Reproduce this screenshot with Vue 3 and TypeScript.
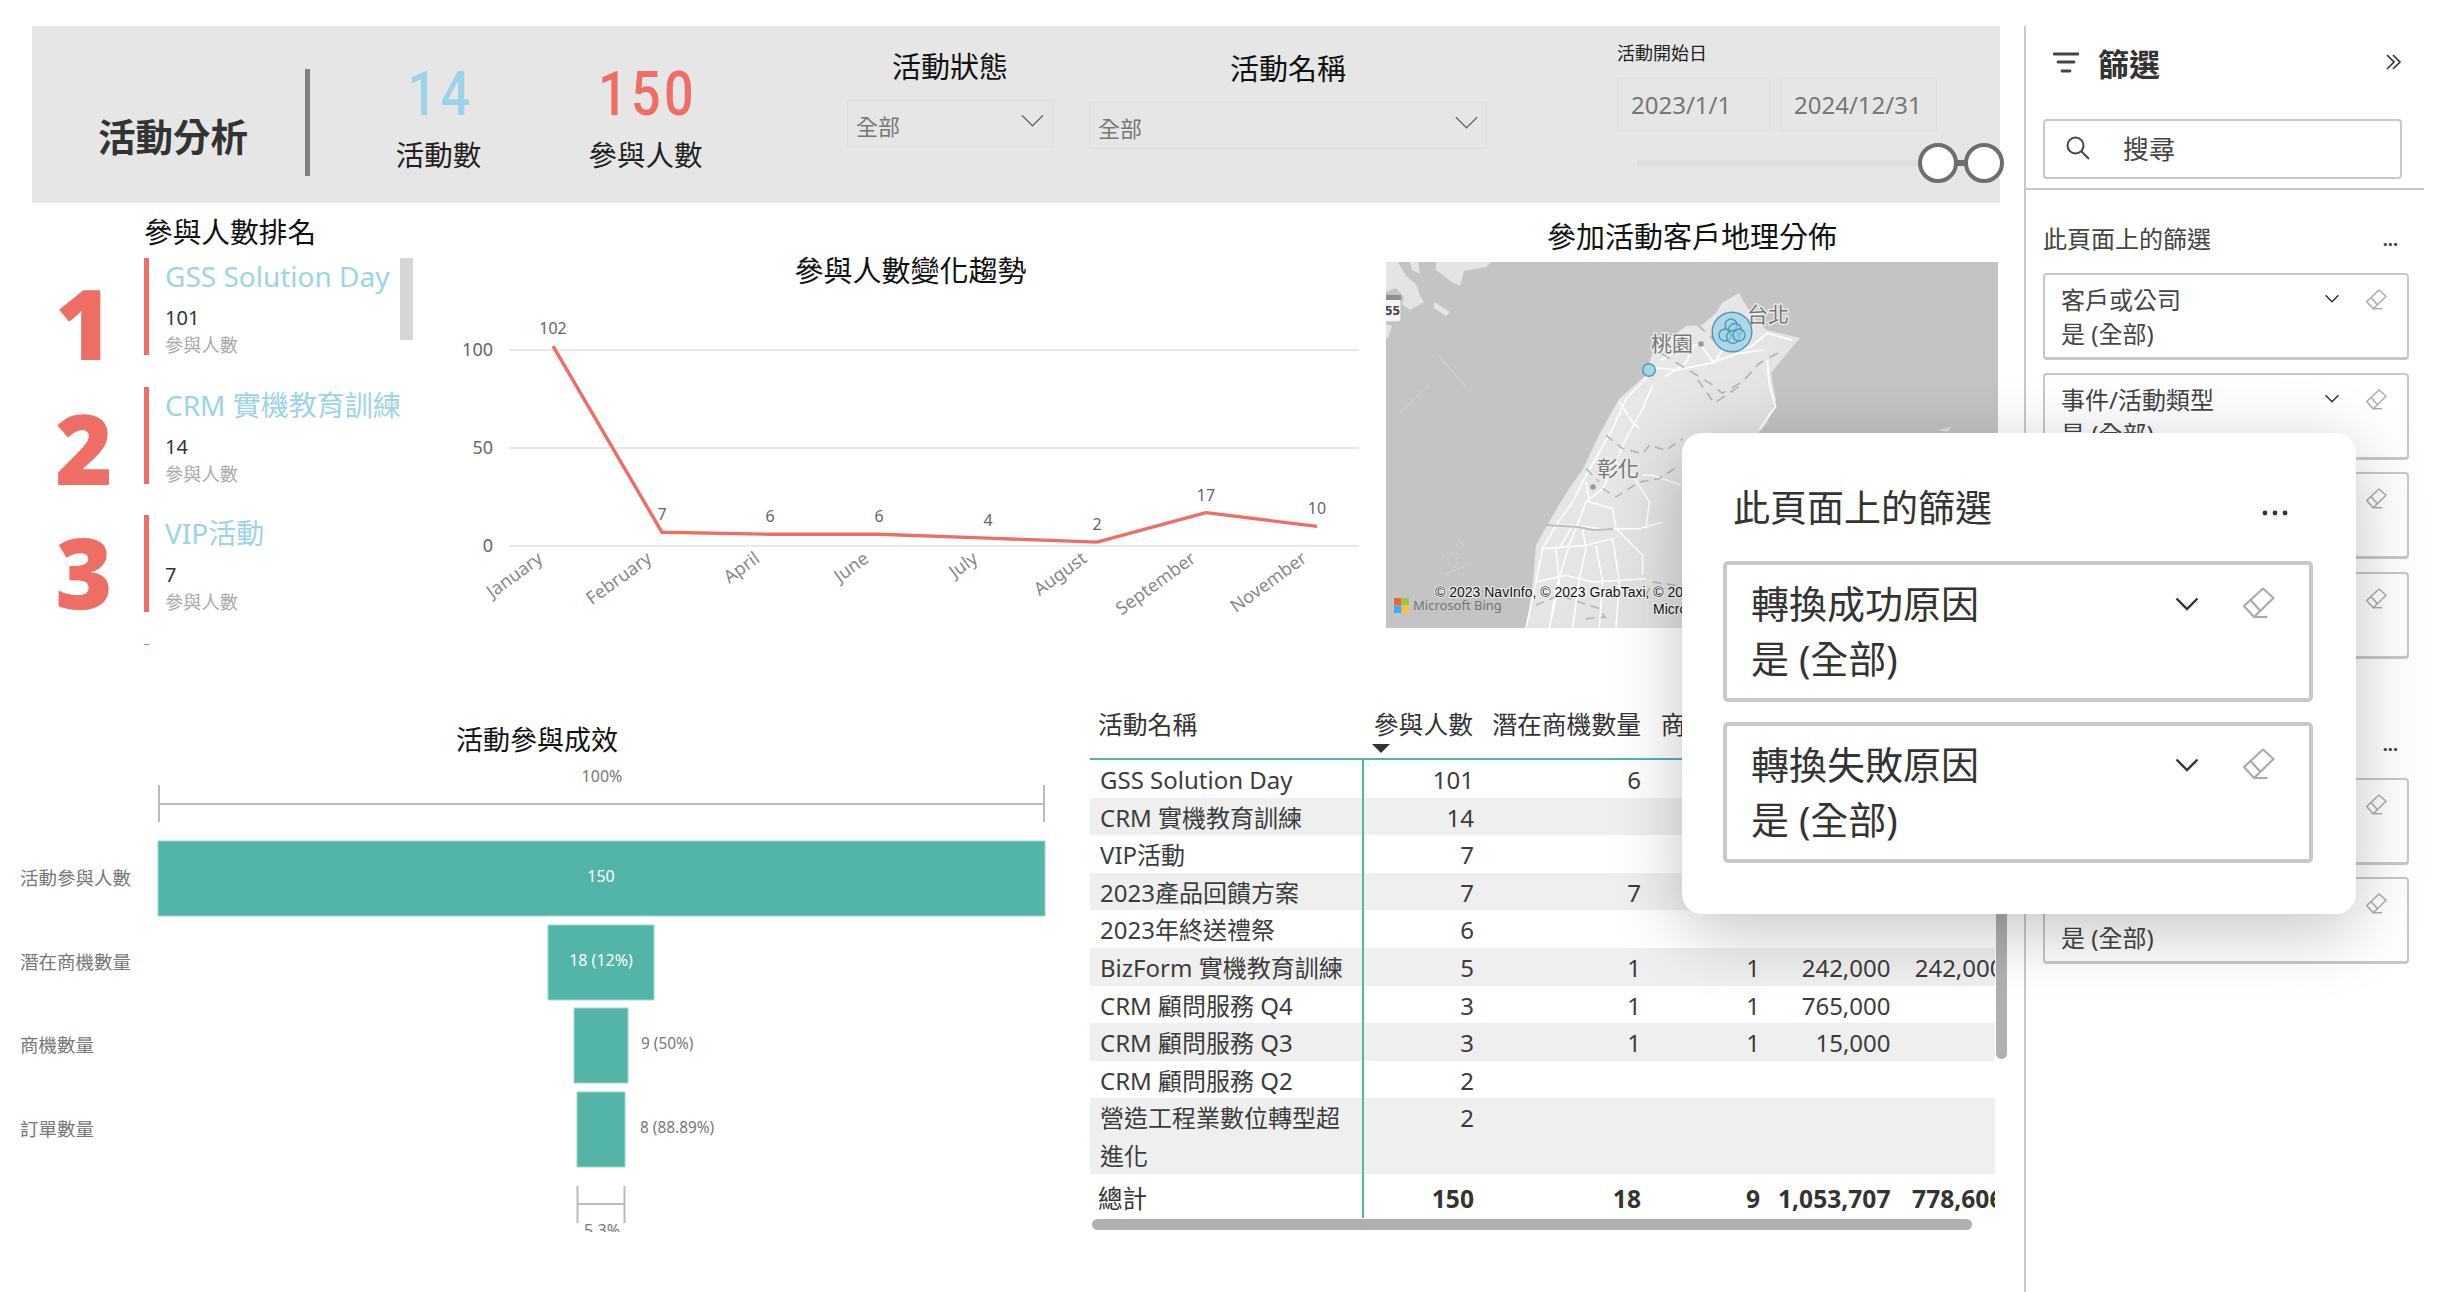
<script setup lang="ts">
interface Rank { num: number; name: string; value: string; offset: number }
const ranks: Rank[] = [
  { num: 1, name: 'GSS Solution Day', value: '101', offset: 15 },
  { num: 2, name: 'CRM 實機教育訓練', value: '14', offset: 11 },
  { num: 3, name: 'VIP活動', value: '7', offset: 7 },
]

const trend = [
  { m: 'January', v: 102, x: 98 },
  { m: 'February', v: 7, x: 207 },
  { m: 'April', v: 6, x: 315 },
  { m: 'June', v: 6, x: 424 },
  { m: 'July', v: 4, x: 533 },
  { m: 'August', v: 2, x: 642 },
  { m: 'September', v: 17, x: 751 },
  { m: 'November', v: 10, x: 862 },
]
const yOf = (v: number): number => 262 - v * 1.96
const linePts = trend.map((p) => `${p.x},${yOf(p.v)}`).join(' ')

const funnel = [
  { label: '活動參與人數', x: 158, w: 887, y: 89, text: '150', inside: true, tx: 601 },
  { label: '潛在商機數量', x: 548, w: 106, y: 173, text: '18 (12%)', inside: true, tx: 601 },
  { label: '商機數量', x: 574, w: 54, y: 256, text: '9 (50%)', inside: false, tx: 641 },
  { label: '訂單數量', x: 577, w: 48, y: 340, text: '8 (88.89%)', inside: false, tx: 640 },
]

interface Row { name: string; c: string[]; grey: boolean }
const rows: Row[] = [
  { name: 'GSS Solution Day', c: ['101', '6', '', '', ''], grey: false },
  { name: 'CRM 實機教育訓練', c: ['14', '', '', '', ''], grey: true },
  { name: 'VIP活動', c: ['7', '', '', '', ''], grey: false },
  { name: '2023產品回饋方案', c: ['7', '7', '', '', ''], grey: true },
  { name: '2023年終送禮祭', c: ['6', '', '', '', ''], grey: false },
  { name: 'BizForm 實機教育訓練', c: ['5', '1', '1', '242,000', '242,000'], grey: true },
  { name: 'CRM 顧問服務 Q4', c: ['3', '1', '1', '765,000', ''], grey: false },
  { name: 'CRM 顧問服務 Q3', c: ['3', '1', '1', '15,000', ''], grey: true },
  { name: 'CRM 顧問服務 Q2', c: ['2', '', '', '', ''], grey: false },
  { name: '營造工程業數位轉型超進化', c: ['2', '', '', '', ''], grey: true },
]
const totals = ['150', '18', '9', '1,053,707', '778,606']
const headers = ['參與人數', '潛在商機數量', '商機數量', '預估金額', '成交金額']

const pageFilters = ['客戶或公司', '事件/活動類型', '活動地點', '活動類別']
const reportFilters = ['負責業務', '產業']
const popupFilters = ['轉換成功原因', '轉換失敗原因']

const bubbles = [
  { x: 345, y: 63, r: 6 },
  { x: 349, y: 68, r: 6.5 },
  { x: 339, y: 73, r: 6 },
  { x: 347, y: 75, r: 6.5 },
  { x: 353, y: 73, r: 6 },
]
const southRoads = [
  'M790 340 L720 410 L680 500 L640 570 L590 660 L560 720 L510 790 L470 860 L450 960 L420 1098',
  'M800 370 L770 440 L720 530 L690 600 L650 680 L600 720 L550 850 L510 980 L490 1098',
  'M470 860 L600 850 L680 830',
  'M500 790 L560 790 L640 800 L760 800 L830 780',
  'M600 660 L610 720 L680 740 L690 800 L770 880 L770 940',
  'M790 720 L780 800',
  'M590 800 L600 860 L580 950 L560 1098',
  'M510 860 L520 960 L490 1098',
  'M640 570 L600 640',
  'M700 420 L740 480 L760 500',
  'M560 790 L520 860',
  'M630 850 L650 960 L640 1098',
  'M680 830 L700 960 L690 1098',
  'M450 960 L540 940 L620 960 L780 950',
  'M770 640 L800 640 L885 670',
  'M690 600 L740 640 L790 720',
]
const southCounty = [
  'M660 520 L710 560 L770 575 L790 550 L840 565 L890 530',
  'M600 620 L640 660',
  'M650 680 L690 705 L760 660 L820 650 L880 610',
  'M450 1030 L520 1000 L640 1040 L660 1070',
  'M780 1000 L800 960 L870 970',
  'M600 1070 L660 1065',
]
const northRoads = [
  'M600 350 L680 360 L760 340 L830 310 L890 300',
  'M650 380 L700 340 L720 290',
  'M740 290 L770 340 L790 300',
  'M830 300 L860 290 L900 250 L960 270',
  'M900 330 L905 400 L920 470 L880 540',
  'M640 330 L680 300 L740 280',
]
const northCounty = [
  'M640 310 L720 370 L760 400 L790 430 L840 395 L880 340 L940 300',
  'M730 390 L770 460 L830 410',
  'M730 225 L770 270',
]
</script>

<template>
  <div class="page">
    <main class="main">
      <header class="top">
        <div class="top-title">活動分析</div>
        <div class="top-rule"></div>
        <div class="kpi kpi-first">
          <div class="kpi-num blue">14</div>
          <div class="kpi-label">活動數</div>
        </div>
        <div class="kpi">
          <div class="kpi-num red">150</div>
          <div class="kpi-label">參與人數</div>
        </div>
        <div class="slicer slicer-status">
          <div class="slicer-title">活動狀態</div>
          <div class="drop">
            <span>全部</span>
            <svg class="drop-chev" viewBox="0 0 24 13"><polyline points="1,1 12,12 23,1" /></svg>
          </div>
        </div>
        <div class="slicer slicer-name">
          <div class="slicer-title">活動名稱</div>
          <div class="drop">
            <span>全部</span>
            <svg class="drop-chev" viewBox="0 0 24 13"><polyline points="1,1 12,12 23,1" /></svg>
          </div>
        </div>
        <div class="dates">
          <div class="dates-title">活動開始日</div>
          <div class="dates-row">
            <div class="date date-a">2023/1/1</div>
            <div class="date date-b">2024/12/31</div>
          </div>
          <div class="track">
            <span class="knob knob-a"></span>
            <span class="knob-link"></span>
            <span class="knob knob-b"></span>
          </div>
        </div>
      </header>

      <section class="row-one">
        <div class="rank">
          <div class="rank-title">參與人數排名</div>
          <div class="rank-list">
            <div v-for="r in ranks" :key="r.num" class="rank-item">
              <div class="rank-num" :style="{ marginTop: r.offset + 'px' }">{{ r.num }}</div>
              <div class="rank-body">
                <div class="rank-name">{{ r.name }}</div>
                <div class="rank-value">{{ r.value }}</div>
                <div class="rank-sub">參與人數</div>
              </div>
            </div>
            <div class="rank-item">
              <div class="rank-num"></div>
              <div class="rank-body"></div>
            </div>
            <div class="rank-scroll"></div>
          </div>
        </div>

        <div class="trend">
          <div class="trend-title">參與人數變化趨勢</div>
          <svg class="trend-svg" width="931" height="376" viewBox="0 0 931 376">
            <g class="grid">
              <line x1="54" x2="904" y1="66" y2="66" />
              <line x1="54" x2="904" y1="164" y2="164" />
              <line x1="54" x2="904" y1="262" y2="262" />
            </g>
            <text class="y-lab" x="38" y="72">100</text>
            <text class="y-lab" x="38" y="170">50</text>
            <text class="y-lab" x="38" y="268">0</text>
            <polyline class="trend-line" :points="linePts" />
            <text v-for="p in trend" :key="'v' + p.m" class="val-lab" :x="p.x" :y="yOf(p.v) - 12">{{ p.v }}</text>
            <text
              v-for="p in trend"
              :key="p.m"
              class="x-lab"
              :transform="`translate(${p.x - 9} 277) rotate(-36)`"
            >{{ p.m }}</text>
          </svg>
        </div>

        <div class="geo">
          <div class="geo-title">參加活動客戶地理分佈</div>
          <svg class="map" width="612" height="366" viewBox="0 0 612 366">
            <defs>
              <clipPath id="mapClip"><rect width="612" height="366" /></clipPath>
              <linearGradient id="landFade" x1="0" y1="0" x2="1" y2="1">
                <stop offset="0" stop-color="#ececec" />
                <stop offset="1" stop-color="#dedede" />
              </linearGradient>
            </defs>
            <g clip-path="url(#mapClip)">
              <rect width="612" height="366" fill="#c4c4c4" />
              <g fill="#e4e4e4">
                <path d="M0 0 L12 0 L20 14 L30 22 L34 34 L24 42 L10 26 L0 30Z" />
                <path d="M24 0 L32 0 L34 12 L26 8Z" />
                <path d="M50 0 L105 0 L100 5 L78 9 L74 24 L66 20 L58 14 L50 8Z" />
                <path d="M20 30 L34 34 L38 40 L24 48 L16 42Z" />
                <path d="M48 40 L64 50 L60 54 L48 46Z" />
                <path d="M0 62 L6 64 L2 76 L0 76Z" />
              </g>
              <g fill="none" stroke="#d8d8d8" stroke-width="1">
                <path d="M15 150 L43 123" />
                <path d="M52 93 L80 125" />
                <path d="M56 295 Q66 288 72 292 L70 304 L60 312 Q70 308 82 302" stroke-dasharray="3 2" />
                <path d="M72 276 L78 284" />
              </g>
              <path fill="#e0e0e0" d="M552 168 L566 164 L562 170Z" />
              <polygon
                fill="url(#landFade)"
                points="353,31 336,41 330,51 316,63 300,64 267,90 260,113 233,137 213,173 197,207 183,227 167,253 150,283 147,320 140,366 400,366 369,175 381,161 390,138 385,111 398,95 414,76 381,68 369,58 361,45"
              />
              <g class="roads" transform="scale(0.3333)">
                <path v-for="d in southRoads" :key="d" :d="d" />
              </g>
              <g class="county" transform="scale(0.3333)">
                <path v-for="d in southCounty" :key="d" :d="d" />
              </g>
              <path class="river" d="M160 263 L193 265 L207 268 L227 267" />
              <g class="roads-n" transform="translate(14 -12) scale(0.408 0.3333)">
                <path v-for="d in northRoads" :key="d" :d="d" />
              </g>
              <g class="county-n" transform="translate(14 -12) scale(0.408 0.3333)">
                <path v-for="d in northCounty" :key="d" :d="d" />
              </g>
              <text class="city" x="361" y="60">台北</text>
              <text class="city" x="265" y="89">桃園</text>
              <circle class="city-dot" cx="315" cy="82" r="2.8" />
              <text class="city" x="211" y="214">彰化</text>
              <circle class="city-dot" cx="207" cy="225" r="2.8" />
              <circle class="bubble big" cx="346" cy="70" r="19.8" />
              <circle v-for="(b, i) in bubbles" :key="i" class="bubble" :cx="b.x" :cy="b.y" :r="b.r" />
              <circle class="bubble solo" cx="263" cy="108" r="6.3" />
              <g>
                <rect x="-6" y="33" width="21" height="27" rx="3" fill="#f4f4f4" stroke="#bbb" />
                <rect x="-6" y="33" width="21" height="5" fill="#8f8f8f" />
                <text class="shield" x="-1" y="53">55</text>
              </g>
              <g>
                <rect x="8" y="336" width="7.4" height="7.4" fill="#e46a2e" />
                <rect x="15.6" y="336" width="7.4" height="7.4" fill="#9cc64c" />
                <rect x="8" y="343.6" width="7.4" height="7.4" fill="#45aaf0" />
                <rect x="15.6" y="343.6" width="7.4" height="7.4" fill="#fbc23d" />
                <text class="bing" x="27" y="348">Microsoft Bing</text>
              </g>
              <text class="attr" x="49" y="335">© 2023 NavInfo, © 2023 GrabTaxi, © 2023 Zenrin</text>
              <text class="attr" x="267" y="352">Microsoft</text>
            </g>
          </svg>
        </div>
      </section>

      <section class="row-two">
        <div class="funnel">
          <div class="funnel-title">活動參與成效</div>
          <svg class="funnel-svg" width="1090" height="480" viewBox="0 0 1090 480">
            <text class="fn-small" x="602" y="30">100%</text>
            <g class="bracket">
              <line x1="159" x2="159" y1="33" y2="70" />
              <line x1="1044" x2="1044" y1="33" y2="70" />
              <line x1="159" x2="1044" y1="52" y2="52" />
            </g>
            <g v-for="f in funnel" :key="f.label">
              <text class="fn-cat" x="20" :y="f.y + 44">{{ f.label }}</text>
              <rect class="fn-bar" :x="f.x" :y="f.y" :width="f.w" height="75" />
              <text :class="f.inside ? 'fn-in' : 'fn-out'" :x="f.tx" :y="f.y + 41">{{ f.text }}</text>
            </g>
            <g class="bracket">
              <line x1="577.5" x2="577.5" y1="434" y2="471" />
              <line x1="624.5" x2="624.5" y1="434" y2="471" />
              <line x1="577.5" x2="624.5" y1="452" y2="452" />
            </g>
            <text class="fn-small" x="602" y="484">5.3%</text>
          </svg>
        </div>

        <div class="table-col">
          <div class="table-clip">
            <div class="t-head t-grid">
              <div class="th th-name">活動名稱</div>
              <div v-for="(h, i) in headers" :key="h" class="th num">
                <span>{{ h }}</span>
                <span v-if="i === 0" class="sort"></span>
              </div>
            </div>
            <div v-for="r in rows" :key="r.name" class="t-grid t-row" :class="{ grey: r.grey }">
              <div class="td-name">{{ r.name }}</div>
              <div v-for="(c, i) in r.c" :key="i" class="td num">{{ c }}</div>
            </div>
            <div class="t-grid t-total">
              <div class="td-name total-name">總計</div>
              <div v-for="(c, i) in totals" :key="i" class="td num total-num">{{ c }}</div>
            </div>
          </div>
          <div class="h-scroll"></div>
          <div class="v-scroll"></div>
        </div>
      </section>
    </main>

    <aside class="side">
      <div class="side-head">
        <svg class="side-filter" width="26" height="22" viewBox="0 0 26 22">
          <path d="M1 3 H25 M5 11 H21 M9 20 H17" />
        </svg>
        <div class="side-title">篩選</div>
        <svg class="side-collapse" width="16" height="16" viewBox="0 0 16 16">
          <path d="M1 1 L8 8 L1 15 M7 1 L14 8 L7 15" />
        </svg>
      </div>
      <div class="search">
        <svg class="search-ico" width="24" height="24" viewBox="0 0 24 24">
          <circle cx="9.5" cy="9.5" r="8" />
          <path d="M15.5 15.5 L23 23" />
        </svg>
        <span>搜尋</span>
      </div>
      <div class="side-rule"></div>

      <div class="group-head group-first">
        <span>此頁面上的篩選</span>
        <span class="dots">...</span>
      </div>
      <div class="cards">
        <div v-for="f in pageFilters" :key="f" class="card">
          <div class="card-top">
            <span class="card-name">{{ f }}</span>
            <svg class="chev" viewBox="0 0 24 14"><polyline points="2,2 12,12 22,2" /></svg>
            <svg class="eraser" viewBox="0 0 32 32">
              <path d="M20 1.5 L30.5 11 L11 30 L1 19Z" />
              <path d="M7.5 13 L17.5 24" />
              <path d="M11 30 H24.5" />
            </svg>
          </div>
          <div class="card-val">是 (全部)</div>
        </div>
      </div>

      <div class="group-head group-second">
        <span>所有頁面上的篩選</span>
        <span class="dots">...</span>
      </div>
      <div class="cards cards-report">
        <div v-for="f in reportFilters" :key="f" class="card">
          <div class="card-top">
            <span class="card-name">{{ f }}</span>
            <svg class="chev" viewBox="0 0 24 14"><polyline points="2,2 12,12 22,2" /></svg>
            <svg class="eraser" viewBox="0 0 32 32">
              <path d="M20 1.5 L30.5 11 L11 30 L1 19Z" />
              <path d="M7.5 13 L17.5 24" />
              <path d="M11 30 H24.5" />
            </svg>
          </div>
          <div class="card-val">是 (全部)</div>
        </div>
      </div>
    </aside>

    <div class="popup">
      <div class="popup-head">
        <span>此頁面上的篩選</span>
        <svg class="popup-dots" width="26" height="6" viewBox="0 0 26 6">
          <circle cx="3" cy="3" r="2.4" /><circle cx="13" cy="3" r="2.4" /><circle cx="23" cy="3" r="2.4" />
        </svg>
      </div>
      <div v-for="f in popupFilters" :key="f" class="pcard">
        <div class="pcard-top">
          <span class="pcard-name">{{ f }}</span>
          <svg class="pchev" viewBox="0 0 24 14"><polyline points="1.5,1.5 12,12 22.5,1.5" /></svg>
          <svg class="peraser" viewBox="0 0 32 32">
            <path d="M20 1.5 L30.5 11 L11 30 L1 19Z" />
            <path d="M7.5 13 L17.5 24" />
            <path d="M11 30 H24.5" />
          </svg>
        </div>
        <div class="pcard-val">是 (全部)</div>
      </div>
    </div>
  </div>
</template>

<style>
html, body { margin: 0; background: #fff; }
</style>

<style scoped>
.page {
  --cjk: "Noto Sans", "Noto Sans CJK TC", sans-serif;
  position: relative;
  display: flex;
  width: 2462px;
  height: 1292px;
  overflow: hidden;
  background: #fff;
  font-family: var(--cjk);
  color: #333;
}
.main { width: 2024px; flex: none; }

/* header */
.top {
  display: flex;
  align-items: flex-start;
  box-sizing: border-box;
  width: 1968px;
  height: 177px;
  margin: 26px 0 0 32px;
  background: #e6e6e6;
}
.top-title {
  width: 207px;
  padding: 87px 0 0 66px;
  font-size: 37.5px;
  line-height: 48px;
  font-weight: 700;
  color: #333;
  white-space: nowrap;
}
.top-rule { width: 5px; height: 107px; margin-top: 43px; background: #808080; }
.kpi { width: 207px; padding-top: 38px; text-align: center; }
.kpi-first { margin-left: 25px; }
.kpi-num {
  font-family: Roboto, sans-serif;
  font-size: 62px;
  font-weight: 500;
  line-height: 60px;
  letter-spacing: 4px;
  transform: translateX(2px) scaleX(0.84);
}
.blue { color: #9cd3e8; }
.red { color: #ee6e66; }
.kpi-label { margin-top: 11px; font-size: 28.5px; line-height: 40px; color: #222; }
.slicer { text-align: center; }
.slicer-status { width: 206px; margin-left: 98px; padding-top: 23px; }
.slicer-name { width: 398px; margin-left: 36px; padding-top: 25px; }
.slicer-title { font-size: 29px; line-height: 36px; margin-bottom: 15px; color: #111; }
.drop {
  display: flex;
  align-items: center;
  justify-content: space-between;
  box-sizing: border-box;
  height: 47px;
  padding: 0 8px 0 8px;
  border: 1px solid #e0e0e0;
  font-size: 22px;
  color: #777;
}
.drop span { padding-top: 2px; }
.drop-chev { width: 23px; height: 13px; margin-top: -6px; }
.drop-chev polyline { fill: none; stroke: #666; stroke-width: 1.3; }
.dates { width: 320px; margin-left: 130px; padding-top: 15px; }
.dates-title { font-size: 18px; line-height: 24px; color: #222; }
.dates-row { display: flex; gap: 10px; margin-top: 13px; }
.date {
  box-sizing: border-box;
  height: 53px;
  padding-left: 13px;
  border: 1px solid #e0e0e0;
  font-size: 24px;
  line-height: 51px;
  color: #777;
}
.date-a { width: 153px; }
.date-b { width: 157px; }
.track {
  position: relative;
  width: 285px;
  height: 6px;
  margin: 29px 0 0 20px;
  background: #dedede;
}
.knob {
  position: absolute;
  top: -17px;
  box-sizing: border-box;
  width: 40px;
  height: 40px;
  border: 4px solid #6e6e6e;
  border-radius: 50%;
  background: #fff;
}
.knob-a { left: 281px; }
.knob-b { left: 327px; }
.knob-link { position: absolute; left: 318px; top: 0; width: 12px; height: 6px; background: #6e6e6e; }

/* row one */
.row-one { display: grid; grid-template-columns: 423px 931px 612px; margin-left: 32px; height: 457px; }
.rank-title {
  margin: 13px 0 10px 112px;
  font-size: 28.7px;
  line-height: 32px;
  color: #111;
  white-space: nowrap;
}
.rank-list { position: relative; height: 387px; overflow: hidden; display: flex; flex-direction: column; gap: 31.6px; }
.rank-item { display: flex; flex: none; height: 97px; }
.rank-num {
  width: 100px;
  padding: 0 10px 0 2px;
  font-family: "Open Sans", sans-serif;
  font-size: 98px;
  line-height: 99px;
  font-weight: 800;
  text-align: center;
  color: #ee6e66;
}
.rank-body { box-sizing: border-box; height: 97px; padding-left: 16px; border-left: 5px solid #ee6e66; white-space: nowrap; }
.rank-name { font-size: 28px; line-height: 36px; height: 42px; color: #9cd3e8; }
.rank-value { margin-top: 5px; font-size: 20px; line-height: 26px; color: #333; }
.rank-sub { margin-top: 1px; font-size: 18.3px; line-height: 26px; color: #aaa; }
.rank-scroll { position: absolute; left: 368px; top: 0; width: 13px; height: 82px; background: #d6d6d6; }

.trend { display: flex; flex-direction: column; }
.trend-title { margin-top: 55px; padding-right: 20px; font-size: 29px; line-height: 26px; text-align: center; color: #111; white-space: nowrap; }
.trend-svg { display: block; flex: none; }
.grid line { stroke: #e8e8e8; stroke-width: 2; }
.y-lab { font-size: 18px; fill: #666; text-anchor: end; }
.val-lab { font-size: 16px; fill: #666; text-anchor: middle; }
.x-lab { font-size: 18px; fill: #888; text-anchor: end; }
.trend-line { fill: none; stroke: #ee6e66; stroke-width: 3.4; stroke-linejoin: round; }

.geo { display: flex; flex-direction: column; }
.geo-title { margin-top: 20px; margin-bottom: 12px; font-size: 29px; line-height: 27px; text-align: center; color: #111; white-space: nowrap; }
.map { display: block; }
.roads path { fill: none; stroke: #fff; stroke-width: 4.5; }
.roads-n path { fill: none; stroke: #fff; stroke-width: 5; }
.county path, .county-n path { fill: none; stroke: #b4b4b4; stroke-width: 4.5; stroke-dasharray: 26 18; }
.river { fill: none; stroke: #bdbdbd; stroke-width: 2; }
.city { font-size: 21px; fill: #777; stroke: #eee; stroke-width: 2.5; paint-order: stroke; }
.city-dot { fill: #999; }
.bubble { fill: #9cd3e8; fill-opacity: 0.55; stroke: #4f97b4; stroke-width: 1.4; }
.bubble.big { fill-opacity: 0.8; }
.bubble.solo { fill-opacity: 0.9; }
.shield { font-size: 13px; font-weight: 700; fill: #444; }
.bing { font-size: 13px; fill: #777; }
.attr { font-family: "Liberation Sans", sans-serif; font-size: 14px; fill: #111; stroke: #fff; stroke-width: 2; stroke-opacity: .75; paint-order: stroke; }

/* row two */
.row-two { display: flex; height: 632px; }
.funnel { width: 1090px; flex: none; }
.funnel-title { margin-top: 68px; padding-right: 16px; font-size: 27px; line-height: 24px; text-align: center; color: #111; }
.funnel-svg { display: block; }
.bracket line { stroke: #bbb; stroke-width: 2; }
.fn-small { font-size: 16px; fill: #777; text-anchor: middle; }
.fn-cat { font-size: 18.5px; fill: #777; }
.fn-bar { fill: #53b4a8; stroke: #9bd8cf; stroke-width: 1; }
.fn-in { font-size: 16px; fill: #fff; text-anchor: middle; }
.fn-out { font-size: 15.4px; fill: #777; }

.table-col { position: relative; flex: none; width: 917px; }
.table-clip { width: 905px; overflow: hidden; }
.t-grid { display: grid; grid-template-columns: 274px 110px 167px 119px 130.5px 113px; width: 913.5px; }
.t-head { box-sizing: border-box; height: 100px; padding-top: 46px; border-bottom: 2px solid #53b4a8; font-size: 24.8px; line-height: 37.6px; }
.th { position: relative; white-space: nowrap; color: #333; }
.th-name { padding-left: 8px; }
.th.num { display: flex; justify-content: flex-end; }
.th.num:nth-child(2) { padding-right: 1px; }
.sort {
  position: absolute;
  left: 8px;
  top: 38px;
  width: 0;
  height: 0;
  border-left: 9px solid transparent;
  border-right: 9px solid transparent;
  border-top: 9px solid #333;
}
.t-row { font-size: 24px; line-height: 37.6px; color: #3c3c3c; }
.t-row > * { padding-top: 1px; margin-bottom: -1px; }
.t-row.grey { background: #efefef; width: 905px; }
.td-name { box-sizing: border-box; padding-left: 10px; border-right: 2px solid #53b4a8; }
.num { text-align: right; white-space: nowrap; }
.t-total { height: 44px; font-size: 24.6px; line-height: 50px; color: #333; }
.total-name { padding-left: 8px; }
.total-num { font-weight: 700; }
.h-scroll { width: 880px; height: 11px; margin: 1px 0 0 2px; border-radius: 6px; background: #b0b0b0; }
.v-scroll { position: absolute; left: 906px; top: 100px; width: 11px; height: 299px; border-radius: 6px; background: #b0b0b0; }

/* sidebar */
.side { box-sizing: border-box; flex: none; width: 400px; margin-top: 26px; border-left: 2px solid #c8c8c8; }
.side-head { display: flex; align-items: center; height: 72px; margin-bottom: 21px; padding-left: 27px; }
.side-filter path { fill: none; stroke: #444; stroke-width: 2.8; stroke-linecap: round; }
.side-title { margin-left: 19px; font-size: 31px; font-weight: 700; color: #333; }
.side-collapse { margin-left: 226px; }
.side-collapse path { fill: none; stroke: #333; stroke-width: 1.6; }
.search {
  display: flex;
  align-items: center;
  box-sizing: border-box;
  width: 359px;
  height: 60px;
  margin-left: 17px;
  padding: 0 0 2px 21px;
  border: 2px solid #c8c8c8;
  border-radius: 4px;
  font-size: 26px;
  color: #444;
}
.search-ico { margin-right: 33px; }
.search-ico circle, .search-ico path { fill: none; stroke: #444; stroke-width: 2; }
.side-rule { height: 2px; margin-top: 9px; background: #c8c8c8; }
.group-head {
  display: flex;
  justify-content: space-between;
  align-items: center;
  width: 355px;
  margin-left: 17px;
  font-size: 24px;
  line-height: 36px;
  color: #444;
}
.group-first { margin-top: 31px; margin-bottom: 16px; }
.group-second { margin-top: 67px; margin-bottom: 16px; }
.dots { font-size: 18px; font-weight: 700; }
.cards { display: flex; flex-direction: column; gap: 12.5px; margin-left: 17px; }
.card {
  box-sizing: border-box;
  width: 366px;
  height: 87px;
  padding: 8px 0 0 16px;
  border: 2px solid #c8c8c8;
  border-bottom-width: 3px;
  border-radius: 4px;
  font-size: 24px;
  line-height: 34px;
  color: #444;
}
.card-top { display: flex; align-items: center; }
.card-name { flex: none; width: 263px; white-space: nowrap; }
.cards-report .card-name { transform: translateY(-2px); }
.chev { width: 16px; height: 9px; margin-top: -3px; }
.chev polyline { fill: none; stroke: #333; stroke-width: 2.4; }
.eraser { width: 21px; height: 21px; margin-left: 26px; margin-top: -1px; }
.eraser path, .peraser path { fill: none; stroke: #aaa; stroke-width: 2.2; stroke-linejoin: round; }

/* popup */
.popup {
  position: absolute;
  left: 1682px;
  top: 433px;
  box-sizing: border-box;
  width: 674px;
  height: 481px;
  padding: 36px 0 0 41px;
  border-radius: 20px;
  background: #fff;
  box-shadow: 0 16px 70px rgba(0, 0, 0, 0.24);
}
.popup-head {
  display: flex;
  align-items: center;
  height: 74px;
  margin-bottom: 18px;
  padding-left: 10px;
  font-size: 37px;
  color: #333;
}
.popup-dots { margin-left: 270px; margin-top: 14px; fill: #333; }
.pcard {
  box-sizing: border-box;
  width: 590px;
  height: 141px;
  margin-bottom: 20px;
  padding: 11px 0 0 24px;
  border: 4px solid #c8c8c8;
  border-radius: 5px;
  font-size: 38px;
  line-height: 55px;
  color: #333;
}
.pcard-top { display: flex; align-items: center; }
.pcard-name { flex: none; width: 424px; white-space: nowrap; }
.pchev { width: 24px; height: 14px; margin-top: 0; }
.pchev polyline { fill: none; stroke: #333; stroke-width: 2.4; }
.peraser { width: 32px; height: 32px; margin-left: 44px; margin-top: -2px; }
</style>
